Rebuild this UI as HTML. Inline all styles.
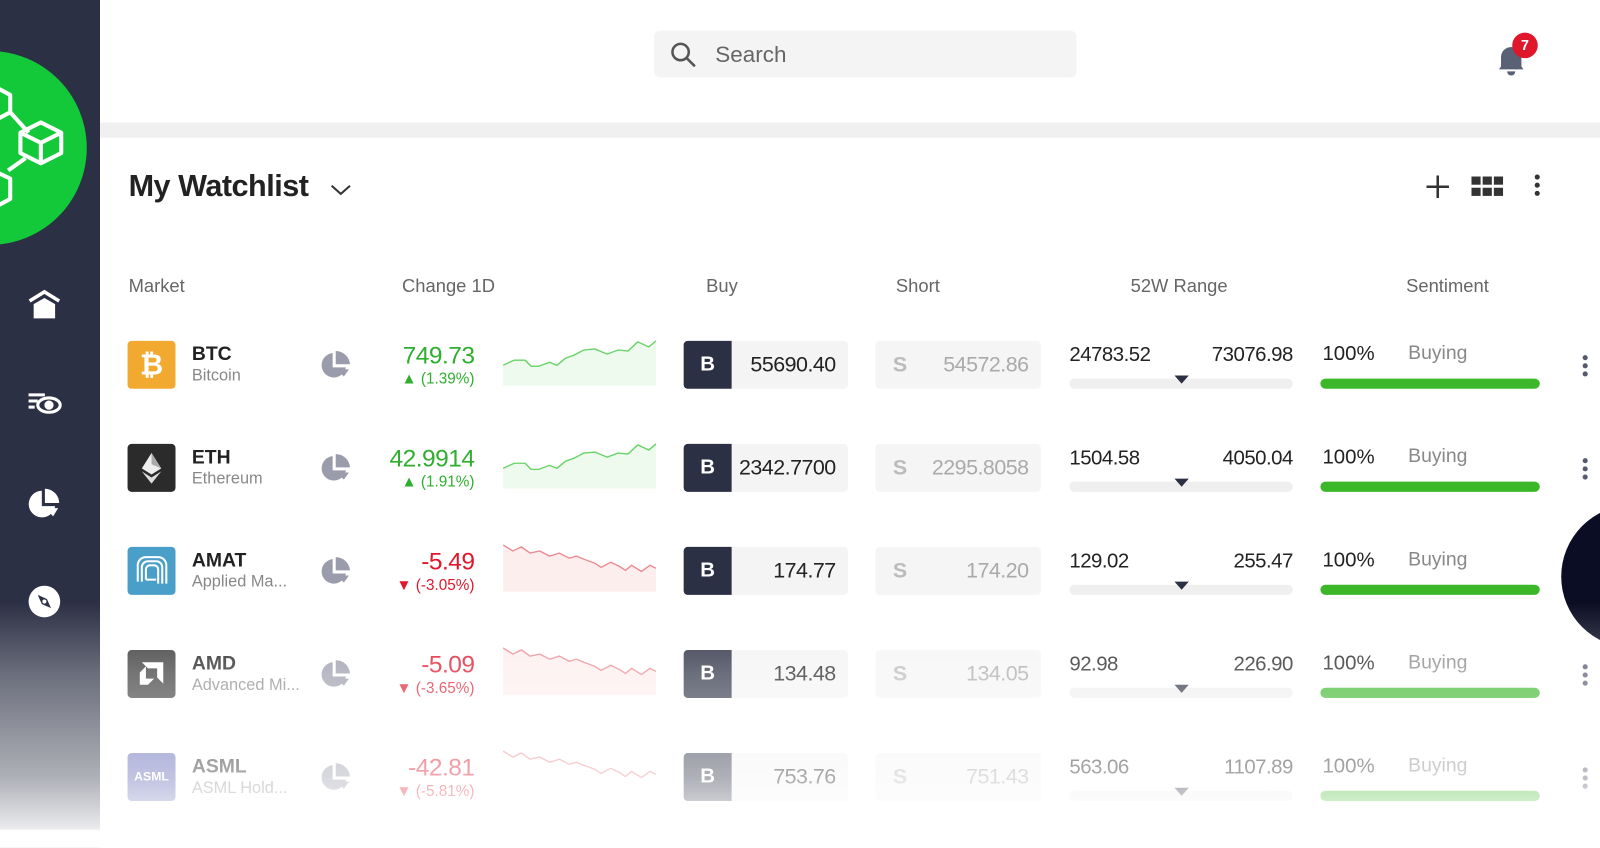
<!DOCTYPE html>
<html><head><meta charset="utf-8"><style>
*{margin:0;padding:0;box-sizing:border-box}
body{width:1600px;height:831px;overflow:hidden;background:#fff;font-family:"Liberation Sans",sans-serif;position:relative;color:#222}
#w{position:absolute;left:0;top:0;width:1600px;height:831px;transform:scale(1.0204);transform-origin:0 0}
.sb{position:absolute;left:0;top:0;width:98px;height:831px;background:#2c3044;overflow:hidden}
.logo{position:absolute;left:-105px;top:50px;width:190px;height:190px;border-radius:50%;background:#13c93a}
.band{position:absolute;left:98px;top:120px;width:1502px;height:15px;background:#f0f0f0}
.search{position:absolute;left:641px;top:30px;width:414px;height:46px;background:#f4f4f4;border-radius:6px}
.search span{position:absolute;left:60px;top:11px;font-size:22px;color:#666}
.abs{position:absolute}
.hdr{position:absolute;top:270px;font-size:18px;color:#666}
.row{position:absolute;left:0;width:1600px;height:60px}
.ic{position:absolute;left:125px;top:0;width:47px;height:47px;border-radius:4px}
.sym{position:absolute;left:188px;top:3px;font-size:19px;font-weight:bold;color:#222}
.nm{position:absolute;left:188px;top:26px;font-size:16px;color:#888}
.ch{position:absolute;right:1135px;top:1px;font-size:24px;text-align:right;letter-spacing:-0.5px}
.pc{position:absolute;right:1135px;top:29px;font-size:15px;text-align:right}
.bb{position:absolute;left:670px;top:0;width:161px;height:47px;background:#f4f4f4;border-radius:4px}
.bb b{position:absolute;left:0;top:0;width:47px;height:47px;background:#2c3044;color:#fff;border-radius:4px 0 0 4px;text-align:center;line-height:47px;font-size:20px}
.bb span{position:absolute;right:12px;top:12px;font-size:21px;color:#222;letter-spacing:-0.5px}
.sh{position:absolute;left:858px;top:0;width:162px;height:47px;background:#f5f5f5;border-radius:4px}
.sh b{position:absolute;left:17px;top:12px;color:#bbb;font-size:21px}
.sh span{position:absolute;right:12px;top:12px;font-size:21px;color:#aaa;letter-spacing:-0.5px}
.lo{position:absolute;left:1048px;top:3px;font-size:20px;letter-spacing:-0.5px}
.hi{position:absolute;right:333px;top:3px;font-size:20px;letter-spacing:-0.5px}
.rg{position:absolute;left:1048px;top:37px;width:219px;height:10px;background:#efefef;border-radius:5px}
.tri{position:absolute;left:1151px;top:34px;border-left:7px solid transparent;border-right:7px solid transparent;border-top:8px solid #2c3044}
.p{position:absolute;left:1296px;top:2px;font-size:20px}
.by{position:absolute;left:1380px;top:2px;font-size:19px;color:#888}
.gb{position:absolute;left:1294px;top:37px;width:215px;height:10px;background:#3cb72a;border-radius:5px}
.dots{position:absolute;left:1551px;top:14px;width:6px}
.dots i{display:block;width:5px;height:5px;border-radius:50%;background:#555a70;margin-bottom:3px}
.g{color:#2fae2f}.r{color:#e0162b}
.fade{position:absolute;left:0;top:0;width:1600px;height:831px;pointer-events:none;background:linear-gradient(to bottom,rgba(255,255,255,0) 590px,rgba(255,255,255,.3) 661px,rgba(255,255,255,.62) 762px,rgba(255,255,255,.9) 812px,#fff 814px)}
</style></head><body><div id="w">
<div class="sb">
 <div class="logo"></div>
 <svg class="abs" style="left:0;top:70px" width="70" height="150" viewBox="0 0 70 150" fill="none" stroke="#fff" stroke-width="4" stroke-linejoin="round">
  <path d="M-5 15 L10 23 L10 40 L-5 48"/><path d="M10 40 L28 60"/>
  <path d="M20 60 L40 50 L60 60 L60 80 L40 90 L20 80 Z M20 60 L40 70 L60 60 M40 70 L40 90"/>
  <path d="M25 85 L8 97"/><path d="M-5 98 L10 105 L10 125 L-5 133"/>
 </svg>
 <svg class="abs" style="left:27px;top:283px" width="33" height="30" viewBox="0 0 33 30"><path d="M2 12 L16.5 3 L31 12" stroke="#fff" stroke-width="3.5" fill="none"/><path d="M6 15 L16.5 9 L27 15 L27 29 L6 29Z" fill="#fff"/></svg>
 <svg class="abs" style="left:27px;top:383px" width="34" height="26" viewBox="0 0 34 26" stroke="#fff" stroke-width="3" fill="none"><path d="M1 4h16M1 10h9M1 16h6"/><ellipse cx="21" cy="14" rx="11" ry="7"/><circle cx="21" cy="14" r="3" fill="#fff"/></svg>
 <svg class="abs" style="left:27px;top:477px" width="33" height="33" viewBox="0 0 33 33"><path d="M14 4 A13 13 0 1 0 27 19 L14 19Z" fill="#fff"/><path d="M17 2 L17 16 L31 16 A14 14 0 0 0 17 2Z" fill="#fff"/><path d="M18 21 L30 21 L25 29Z" fill="#fff"/></svg>
 <svg class="abs" style="left:27px;top:573px" width="33" height="33" viewBox="0 0 33 33"><circle cx="16.5" cy="16.5" r="15.5" fill="#fff"/><path d="M10 10 L19 14 L23 23 L14 19Z" fill="#2c3044"/><circle cx="16.5" cy="16.5" r="2" fill="#fff"/></svg>
</div>
<div class="band"></div>
<div class="search"><svg class="abs" style="left:16px;top:11px" width="26" height="26" viewBox="0 0 26 26" stroke="#555" stroke-width="2.5" fill="none"><circle cx="10" cy="10" r="8"/><path d="M16 16 L24 24"/></svg><span>Search</span></div>
<svg class="abs" style="left:1465px;top:40px" width="34" height="36" viewBox="0 0 34 36"><path d="M4 28 L6 25 L6 16 A10 10 0 0 1 26 16 L26 25 L28 28Z" fill="#5a6075"/><path d="M12 30 A4 4 0 0 0 20 30Z" fill="#5a6075"/></svg>
<div class="abs" style="left:1482px;top:32px;width:25px;height:25px;border-radius:50%;background:#e0162b;color:#fff;font-size:14px;font-weight:bold;text-align:center;line-height:25px">7</div>
<div class="abs" style="left:126px;top:166px;font-size:30px;font-weight:bold;color:#222;letter-spacing:-0.5px">My Watchlist</div>
<svg class="abs" style="left:323px;top:179px" width="22" height="14" viewBox="0 0 22 14" stroke="#333" stroke-width="2" fill="none"><path d="M2 3 L11 11 L20 3"/></svg>
<svg class="abs" style="left:1397px;top:171px" width="24" height="24" stroke="#333" stroke-width="2.5"><path d="M12 1v22M1 12h22"/></svg>
<svg class="abs" style="left:1442px;top:173px" width="32" height="20" fill="#333"><rect x="0" y="0" width="9" height="8"/><rect x="11" y="0" width="9" height="8"/><rect x="22" y="0" width="9" height="8"/><rect x="0" y="11" width="9" height="8"/><rect x="11" y="11" width="9" height="8"/><rect x="22" y="11" width="9" height="8"/></svg>
<div class="dots" style="left:1504px;top:171px"><i style="background:#333"></i><i style="background:#333"></i><i style="background:#333"></i></div>

<div class="hdr" style="left:126px">Market</div>
<div class="hdr" style="left:394px">Change 1D</div>
<div class="hdr" style="left:692px">Buy</div>
<div class="hdr" style="left:878px">Short</div>
<div class="hdr" style="left:1108px">52W Range</div>
<div class="hdr" style="left:1378px">Sentiment</div>

<div class="row" style="top:334px">
 <div class="ic" style="background:#f2a92f;color:#fff;font-size:28px;font-weight:bold;text-align:center;line-height:47px">₿</div>
 <div class="sym">BTC</div><div class="nm">Bitcoin</div>
 <svg class="abs" style="left:313px;top:9px" width="31" height="31"><path d="M13 3 A12 12 0 1 0 26 17 L13 17Z" fill="#9a9cab"/><path d="M16 1 L16 14 L30 14 A14 14 0 0 0 16 1Z" fill="#9a9cab"/><path d="M17 19 L29 19 L24 26Z" fill="#9a9cab"/></svg>
 <div class="ch g">749.73</div><div class="pc g">▲ (1.39%)</div>
 <svg class="abs" style="left:493px;top:-6px" width="150" height="50"><path d="M0 30 L9 25 L18 25 L23 31 L29 31 L38 27 L44 30 L51 23 L58 20 L66 15 L75 14 L85 19 L94 15 L102 16 L110 7 L119 12 L125 6 L125 50 L0 50Z" fill="#eefaee" transform="scale(1.2,1)"/><path d="M0 30 L9 25 L18 25 L23 31 L29 31 L38 27 L44 30 L51 23 L58 20 L66 15 L75 14 L85 19 L94 15 L102 16 L110 7 L119 12 L125 6" stroke="#66d466" stroke-width="1.3" fill="none" transform="scale(1.2,1)"/></svg>
 <div class="bb"><b>B</b><span>55690.40</span></div>
 <div class="sh"><b>S</b><span>54572.86</span></div>
 <div class="lo">24783.52</div><div class="hi">73076.98</div><div class="rg"></div><div class="tri"></div>
 <div class="p">100%</div><div class="by">Buying</div><div class="gb"></div>
 <div class="dots"><i></i><i></i><i></i></div>
</div>
<div class="row" style="top:435px">
 <div class="ic" style="background:#2b2b2b"><svg width="47" height="47"><path d="M23.5 9 L33 24 L23.5 30 L14 24Z" fill="#eee"/><path d="M23.5 9 L33 24 L23.5 20Z" fill="#aaa"/><path d="M14 27 L23.5 33 L33 27 L23.5 39Z" fill="#ddd"/></svg></div>
 <div class="sym">ETH</div><div class="nm">Ethereum</div>
 <svg class="abs" style="left:313px;top:9px" width="31" height="31"><path d="M13 3 A12 12 0 1 0 26 17 L13 17Z" fill="#9a9cab"/><path d="M16 1 L16 14 L30 14 A14 14 0 0 0 16 1Z" fill="#9a9cab"/><path d="M17 19 L29 19 L24 26Z" fill="#9a9cab"/></svg>
 <div class="ch g">42.9914</div><div class="pc g">▲ (1.91%)</div>
 <svg class="abs" style="left:493px;top:-6px" width="150" height="50"><path d="M0 30 L9 25 L18 25 L23 31 L29 31 L38 27 L44 30 L51 23 L58 20 L66 15 L75 14 L85 19 L94 15 L102 16 L110 7 L119 12 L125 6 L125 50 L0 50Z" fill="#eefaee" transform="scale(1.2,1)"/><path d="M0 30 L9 25 L18 25 L23 31 L29 31 L38 27 L44 30 L51 23 L58 20 L66 15 L75 14 L85 19 L94 15 L102 16 L110 7 L119 12 L125 6" stroke="#66d466" stroke-width="1.3" fill="none" transform="scale(1.2,1)"/></svg>
 <div class="bb"><b>B</b><span>2342.7700</span></div>
 <div class="sh"><b>S</b><span>2295.8058</span></div>
 <div class="lo">1504.58</div><div class="hi">4050.04</div><div class="rg"></div><div class="tri"></div>
 <div class="p">100%</div><div class="by">Buying</div><div class="gb"></div>
 <div class="dots"><i></i><i></i><i></i></div>
</div>
<div class="abs" style="left:1530px;top:495px;width:140px;height:140px;border-radius:50%;background:#0b0d24"></div>
<div class="row" style="top:536px">
 <div class="ic" style="background:#4a9fc8"><svg width="47" height="47" stroke="#fff" stroke-width="2" fill="none"><path d="M10 34 V18 A8 8 0 0 1 18 10 H30 A8 8 0 0 1 38 18 V36"/><path d="M14 34 V20 A6 6 0 0 1 20 14 H28 A6 6 0 0 1 34 20 V36"/><path d="M18 32 V22 A4 4 0 0 1 22 18 H26 A4 4 0 0 1 30 22 V36"/><path d="M18 32 H28"/></svg></div>
 <div class="sym">AMAT</div><div class="nm">Applied Ma...</div>
 <svg class="abs" style="left:313px;top:9px" width="31" height="31"><path d="M13 3 A12 12 0 1 0 26 17 L13 17Z" fill="#9a9cab"/><path d="M16 1 L16 14 L30 14 A14 14 0 0 0 16 1Z" fill="#9a9cab"/><path d="M17 19 L29 19 L24 26Z" fill="#9a9cab"/></svg>
 <div class="ch r">-5.49</div><div class="pc r">▼ (-3.05%)</div>
 <svg class="abs" style="left:493px;top:-6px" width="150" height="50"><path d="M0 4 L8 10 L15 6 L22 12 L30 10 L38 15 L46 12 L54 17 L60 15 L66 18 L75 22 L80 26 L88 21 L95 25 L100 29 L105 24 L113 30 L120 24 L125 27 L125 50 L0 50Z" fill="#fdeeee" transform="scale(1.2,1)"/><path d="M0 4 L8 10 L15 6 L22 12 L30 10 L38 15 L46 12 L54 17 L60 15 L66 18 L75 22 L80 26 L88 21 L95 25 L100 29 L105 24 L113 30 L120 24 L125 27" stroke="#ea8a92" stroke-width="1.3" fill="none" transform="scale(1.2,1)"/></svg>
 <div class="bb"><b>B</b><span>174.77</span></div>
 <div class="sh"><b>S</b><span>174.20</span></div>
 <div class="lo">129.02</div><div class="hi">255.47</div><div class="rg"></div><div class="tri"></div>
 <div class="p">100%</div><div class="by">Buying</div><div class="gb"></div>
</div>
<div class="row" style="top:637px">
 <div class="ic" style="background:#3a3a3a"><svg width="47" height="47" fill="#fff"><path d="M14 12 H35 V33 L29 27 V18 H20Z"/><path d="M12 22 L18 16 V28 H26 L20 34 H12Z"/></svg></div>
 <div class="sym">AMD</div><div class="nm">Advanced Mi...</div>
 <svg class="abs" style="left:313px;top:9px" width="31" height="31"><path d="M13 3 A12 12 0 1 0 26 17 L13 17Z" fill="#9a9cab"/><path d="M16 1 L16 14 L30 14 A14 14 0 0 0 16 1Z" fill="#9a9cab"/><path d="M17 19 L29 19 L24 26Z" fill="#9a9cab"/></svg>
 <div class="ch r">-5.09</div><div class="pc r">▼ (-3.65%)</div>
 <svg class="abs" style="left:493px;top:-6px" width="150" height="50"><path d="M0 4 L8 10 L15 6 L22 12 L30 10 L38 15 L46 12 L54 17 L60 15 L66 18 L75 22 L80 26 L88 21 L95 25 L100 29 L105 24 L113 30 L120 24 L125 27 L125 50 L0 50Z" fill="#fdeeee" transform="scale(1.2,1)"/><path d="M0 4 L8 10 L15 6 L22 12 L30 10 L38 15 L46 12 L54 17 L60 15 L66 18 L75 22 L80 26 L88 21 L95 25 L100 29 L105 24 L113 30 L120 24 L125 27" stroke="#ea8a92" stroke-width="1.3" fill="none" transform="scale(1.2,1)"/></svg>
 <div class="bb"><b>B</b><span>134.48</span></div>
 <div class="sh"><b>S</b><span>134.05</span></div>
 <div class="lo">92.98</div><div class="hi">226.90</div><div class="rg"></div><div class="tri"></div>
 <div class="p">100%</div><div class="by">Buying</div><div class="gb"></div>
 <div class="dots"><i></i><i></i><i></i></div>
</div>
<div class="row" style="top:738px">
 <div class="ic" style="background:#5a62b0;color:#fff;font-size:12px;font-weight:bold;text-align:center;line-height:47px">ASML</div>
 <div class="sym">ASML</div><div class="nm">ASML Hold...</div>
 <svg class="abs" style="left:313px;top:9px" width="31" height="31"><path d="M13 3 A12 12 0 1 0 26 17 L13 17Z" fill="#9a9cab"/><path d="M16 1 L16 14 L30 14 A14 14 0 0 0 16 1Z" fill="#9a9cab"/><path d="M17 19 L29 19 L24 26Z" fill="#9a9cab"/></svg>
 <div class="ch r">-42.81</div><div class="pc r">▼ (-5.81%)</div>
 <svg class="abs" style="left:493px;top:-6px" width="150" height="50"><path d="M0 4 L8 10 L15 6 L22 12 L30 10 L38 15 L46 12 L54 17 L60 15 L66 18 L75 22 L80 26 L88 21 L95 25 L100 29 L105 24 L113 30 L120 24 L125 27" stroke="#ea8a92" stroke-width="1.3" fill="none" transform="scale(1.2,1)"/></svg>
 <div class="bb"><b>B</b><span>753.76</span></div>
 <div class="sh"><b>S</b><span>751.43</span></div>
 <div class="lo">563.06</div><div class="hi">1107.89</div><div class="rg"></div><div class="tri"></div>
 <div class="p">100%</div><div class="by">Buying</div><div class="gb"></div>
 <div class="dots"><i></i><i></i><i></i></div>
</div>
<div class="fade"></div>
</div></body></html>
